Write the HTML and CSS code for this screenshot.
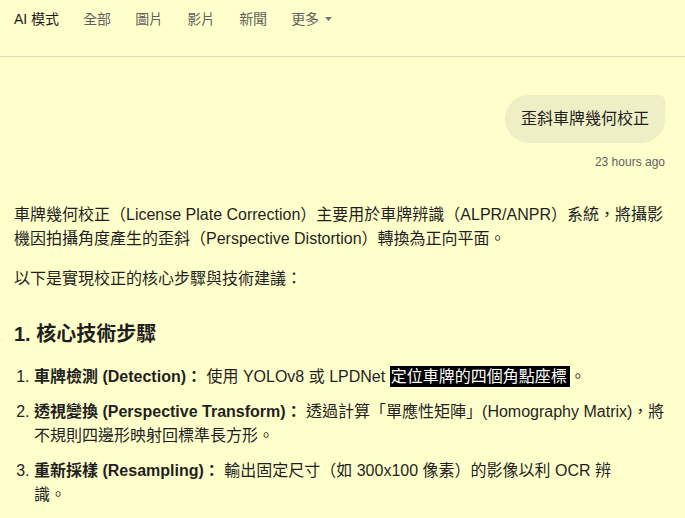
FILE: index.html
```html
<!DOCTYPE html>
<html lang="zh-Hant">
<head>
<meta charset="utf-8">
<title>AI 模式</title>
<link rel="stylesheet" href="styles.css">
</head>
<body>
<header class="topbar">
  <nav class="tabs">
    <span class="tab tab-active">AI 模式</span>
    <span class="tab">全部</span>
    <span class="tab">圖片</span>
    <span class="tab">影片</span>
    <span class="tab">新聞</span>
    <span class="tab tab-more">更多<svg class="caret" width="7" height="4" viewBox="0 0 7 4"><path d="M0 0h7L3.5 4z" fill="#70757a"/></svg></span>
  </nav>
</header>
<main class="conv">
  <div class="user-row">
    <div class="bubble">歪斜車牌幾何校正</div>
    <div class="stamp">23 hours ago</div>
  </div>
  <div class="answer">
    <p>車牌幾何校正（License Plate Correction）主要用於車牌辨識（ALPR/ANPR）系統，將攝影機因拍攝角度產生的歪斜（Perspective Distortion）轉換為正向平面。</p>
    <p>以下是實現校正的核心步驟與技術建議：</p>
    <h2>1. 核心技術步驟</h2>
    <ol class="steps">
      <li><strong>車牌檢測 (Detection)：</strong> 使用 YOLOv8 或 LPDNet <mark class="hl">定位車牌的四個角點座標</mark>。</li>
      <li><strong>透視變換 (Perspective Transform)：</strong> 透過計算「單應性矩陣」(Homography Matrix)，將不規則四邊形映射回標準長方形。</li>
      <li><strong>重新採樣 (Resampling)：</strong> 輸出固定尺寸（如 300x100 像素）的影像以利 OCR 辨<span class="nowrap">識。<span class="cite"></span></span></li>
    </ol>
  </div>
</main>
</body>
</html>
```
FILE: styles.css
```css
html, body {
  margin: 0;
  padding: 0;
}
body {
  background: #ffffcc;
  color: #1f1f1f;
  font-family: "Liberation Sans", "Noto Sans CJK TC", sans-serif;
  font-size: 16px;
  line-height: 24px;
  width: 685px;
  height: 518px;
  overflow: hidden;
}
.topbar {
  height: 56px;
  border-bottom: 1px solid #dcdcb4;
  box-sizing: content-box;
}
.tabs {
  display: flex;
  gap: 24px;
  padding: 9px 14px 0;
  font-size: 14px;
  line-height: 20px;
}
.tab {
  color: #5f6161;
  display: flex;
  align-items: center;
}
.tab-active {
  color: #1a1a1a;
}
.caret {
  margin-left: 6px;
}
.conv {
  padding: 0 14px;
}
.user-row {
  display: flex;
  flex-direction: column;
  align-items: flex-end;
  padding-top: 38px;
  padding-right: 6px;
}
.bubble {
  background: #efefc6;
  border-radius: 24px 6px 24px 24px;
  padding: 12px 16px;
  font-size: 16px;
  line-height: 24px;
  color: #1f1f1f;
}
.stamp {
  margin-top: 11px;
  font-size: 12px;
  line-height: 16px;
  color: #5f6161;
}
.answer {
  padding-top: 33px;
}
.answer p {
  margin: 0 0 16px;
}
.answer h2 {
  font-size: 20px;
  line-height: 28px;
  font-weight: bold;
  margin: 29px 0 0;
}
.steps {
  margin: 17px 0 0;
  padding-left: 20px;
}
.steps li {
  margin-bottom: 11px;
}
.hl {
  background: #000;
  color: #fff;
  padding: 2px 3px 2px 1px;
}
.nowrap {
  white-space: nowrap;
}
.cite {
  display: inline-block;
  width: 40px;
  height: 1px;
}
```
